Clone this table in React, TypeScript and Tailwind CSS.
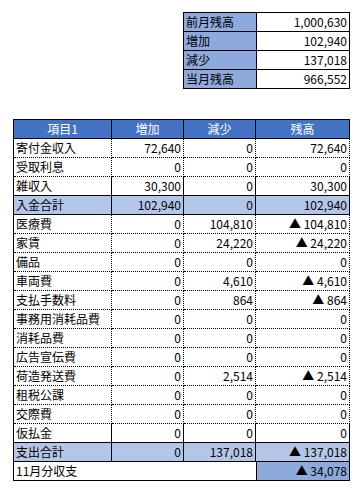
import React from "react";

type Row = {
  name: string;
  inc: string;
  dec: string;
  bal: string;
  total?: boolean;
  solidBottom?: boolean;
};

const rows: Row[] = [
  { name: "寄付金収入", inc: "72,640", dec: "0", bal: "72,640" },
  { name: "受取利息", inc: "0", dec: "0", bal: "0" },
  { name: "雑収入", inc: "30,300", dec: "0", bal: "30,300", solidBottom: true },
  { name: "入金合計", inc: "102,940", dec: "0", bal: "102,940", total: true, solidBottom: true },
  { name: "医療費", inc: "0", dec: "104,810", bal: "▲ 104,810" },
  { name: "家賃", inc: "0", dec: "24,220", bal: "▲ 24,220" },
  { name: "備品", inc: "0", dec: "0", bal: "0" },
  { name: "車両費", inc: "0", dec: "4,610", bal: "▲ 4,610" },
  { name: "支払手数料", inc: "0", dec: "864", bal: "▲ 864" },
  { name: "事務用消耗品費", inc: "0", dec: "0", bal: "0" },
  { name: "消耗品費", inc: "0", dec: "0", bal: "0" },
  { name: "広告宣伝費", inc: "0", dec: "0", bal: "0" },
  { name: "荷造発送費", inc: "0", dec: "2,514", bal: "▲ 2,514" },
  { name: "租税公課", inc: "0", dec: "0", bal: "0" },
  { name: "交際費", inc: "0", dec: "0", bal: "0" },
  { name: "仮払金", inc: "0", dec: "0", bal: "0", solidBottom: true },
  { name: "支出合計", inc: "0", dec: "137,018", bal: "▲ 137,018", total: true, solidBottom: true },
];

const summary = [
  ["前月残高", "1,000,630"],
  ["増加", "102,940"],
  ["減少", "137,018"],
  ["当月残高", "966,552"],
];

const font = { fontFamily: '"Noto Sans CJK JP", "Noto Sans", sans-serif' };

export default function App() {
  return (
    <div className="w-[363px] h-[493px] bg-white text-black text-[12px] leading-none" style={font}>
      {/* summary box */}
      <div className="pt-[12px] pl-[183px]">
        <div className="w-[167px] border-l border-t border-black">
          {summary.map(([k, v]) => (
            <div key={k} className="flex h-[19px]">
              <div className="w-[73px] bg-[#8EA9DB] border-r border-b border-black flex items-center pl-[2px]">{k}</div>
              <div className="w-[93px] border-r border-b border-black flex items-center justify-end pr-[2px]">{v}</div>
            </div>
          ))}
        </div>
      </div>

      {/* main table */}
      <div className="mt-[30px] ml-[13px] w-[337px] border-l border-t border-black">
        <div className="flex h-[19px] bg-[#4472C4] text-white">
          <div className="w-[98px] border-r border-b border-black flex items-center justify-center">項目1</div>
          <div className="w-[72px] border-r border-b border-black flex items-center justify-center">増加</div>
          <div className="w-[72px] border-r border-b border-black flex items-center justify-center">減少</div>
          <div className="w-[94px] border-r border-b border-black flex items-center justify-center">残高</div>
        </div>
        {rows.map((r) => {
          const b = r.solidBottom ? "border-solid" : "border-dotted";
          return (
            <div key={r.name} className={`flex h-[19px] ${r.total ? "bg-[#B4C6E7]" : ""}`}>
              <div className={`w-[98px] border-r border-b border-black ${b} flex items-center pl-[2px]`}>
                <span>{r.name}</span>
              </div>
              <div className={`w-[72px] border-r border-b border-black ${b} flex items-center justify-end pr-[2px]`}>{r.inc}</div>
              <div className={`w-[72px] border-r border-b border-black ${b} flex items-center justify-end pr-[2px]`}>{r.dec}</div>
              <div className={`w-[94px] border-r border-b border-black ${b} flex items-center justify-end pr-[2px]`}>{r.bal}</div>
            </div>
          );
        })}
        <div className="flex h-[19px]">
          <div className="w-[244px] border-r border-b border-black flex items-center pl-[2px]">11月分収支</div>
          <div className="w-[94px] bg-[#8EA9DB] border-r border-b border-black flex items-center justify-end pr-[2px]">▲ 34,078</div>
        </div>
      </div>
    </div>
  );
}
